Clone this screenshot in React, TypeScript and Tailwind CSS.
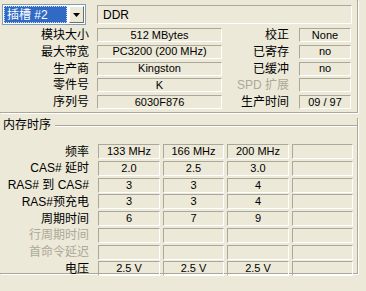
import React from 'react';

const sunken =
  'border-t border-l border-b border-r border-t-[#ACA899] border-l-[#ACA899] border-b-white border-r-white';

const Field: React.FC<{ children?: React.ReactNode; className?: string }> = ({ children, className = '' }) => (
  <div className={`flex items-center justify-center text-[11px] leading-none text-black ${sunken} ${className}`}>
    {children}
  </div>
);

const Label: React.FC<{ children: React.ReactNode; width: string; muted?: boolean }> = ({ children, width, muted }) => (
  <div className={`${width} text-right text-[12px] leading-none whitespace-nowrap ${muted ? 'text-[#ACA899]' : 'text-black'}`}>
    {children}
  </div>
);

const moduleRows = [
  { l: '模块大小', v: '512 MBytes', rl: '校正', rv: 'None' },
  { l: '最大带宽', v: 'PC3200 (200 MHz)', rl: '已寄存', rv: 'no' },
  { l: '生产商', v: 'Kingston', rl: '已缓冲', rv: 'no' },
  { l: '零件号', v: 'K', rl: 'SPD 扩展', rv: '', muted: true },
  { l: '序列号', v: '6030F876', rl: '生产时间', rv: '09 / 97' },
];

const timingRows = [
  { l: '频率', v: ['133 MHz', '166 MHz', '200 MHz', ''] },
  { l: 'CAS# 延时', v: ['2.0', '2.5', '3.0', ''] },
  { l: 'RAS# 到 CAS#', v: ['3', '3', '4', ''] },
  { l: 'RAS#预充电', v: ['3', '3', '4', ''] },
  { l: '周期时间', v: ['6', '7', '9', ''] },
  { l: '行周期时间', v: ['', '', '', ''], muted: true },
  { l: '首命令延迟', v: ['', '', '', ''], muted: true },
  { l: '电压', v: ['2.5 V', '2.5 V', '2.5 V', ''] },
];

const colWidths = ['w-[62px]', 'w-[61px]', 'w-[62px]', 'w-[61px]'];

export default function App() {
  return (
    <div className="w-[366px] h-[291px] overflow-hidden bg-[#ECE9D8] font-['Liberation_Sans','Noto_Sans_CJK_SC',sans-serif]">
      {/* slot selection + module info */}
      <div className="w-[358px] h-[113px] border-r border-b border-[#ACA899] shadow-[1px_1px_0_#fff] pt-[4px]">
        <div className="flex items-start pl-[2px]">
          <div className="w-[84px] h-[21px] border border-[#7F9DB9] bg-white flex p-[1px]">
            <div className="flex-1 bg-[#316AC5] border border-dotted border-[#c9d8f0] flex items-center pl-[2px] text-[12px] leading-none text-white whitespace-nowrap">
              插槽 #2
            </div>
            <div className="ml-[2px] w-[15px] flex items-center justify-center bg-[#ECE9D8] border-t border-l border-t-white border-l-white border-b border-r border-b-[#716F64] border-r-[#716F64]">
              <svg width="7" height="4" viewBox="0 0 7 4">
                <path d="M0 0h7L3.5 4z" fill="#000" />
              </svg>
            </div>
          </div>
          <Field className="ml-[11px] mt-[1px] w-[255px] h-[19px] !justify-start pl-[5px] text-[12px]">DDR</Field>
        </div>

        <div className="mt-[3px] flex flex-col gap-y-[2.75px]">
          {moduleRows.map((r) => (
            <div key={r.l} className="flex items-center h-[14px]">
              <Label width="w-[89px]">{r.l}</Label>
              <Field className="ml-[8px] w-[125px] h-[14px]">{r.v}</Field>
              <Label width="w-[67px]" muted={r.muted}>{r.rl}</Label>
              <Field className="ml-[10px] w-[52px] h-[14px]">{r.rv}</Field>
            </div>
          ))}
        </div>
      </div>

      {/* memory timings */}
      <div className="mt-[12px] w-[358px] h-[156px] border-r border-b border-[#ACA899] shadow-[1px_1px_0_#fff]">
        <div className="-mt-[7px] h-[14px] flex items-center pl-[3px]">
          <span className="text-[12px] leading-none text-black">内存时序</span>
          <div className="ml-[4px] flex-1 border-t border-[#ACA899] shadow-[0_1px_0_#fff]" />
        </div>
        <div className="mt-[12px] flex flex-col gap-y-[1.75px]">
          {timingRows.map((r) => (
            <div key={r.l} className="flex items-center h-[15px]">
              <Label width="w-[89px]" muted={r.muted}>{r.l}</Label>
              <div className="ml-[9px] flex gap-x-[3px]">
                {r.v.map((v, i) => (
                  <Field key={i} className={`${colWidths[i]} h-[15px]`}>{v}</Field>
                ))}
              </div>
            </div>
          ))}
        </div>
      </div>
    </div>
  );
}
